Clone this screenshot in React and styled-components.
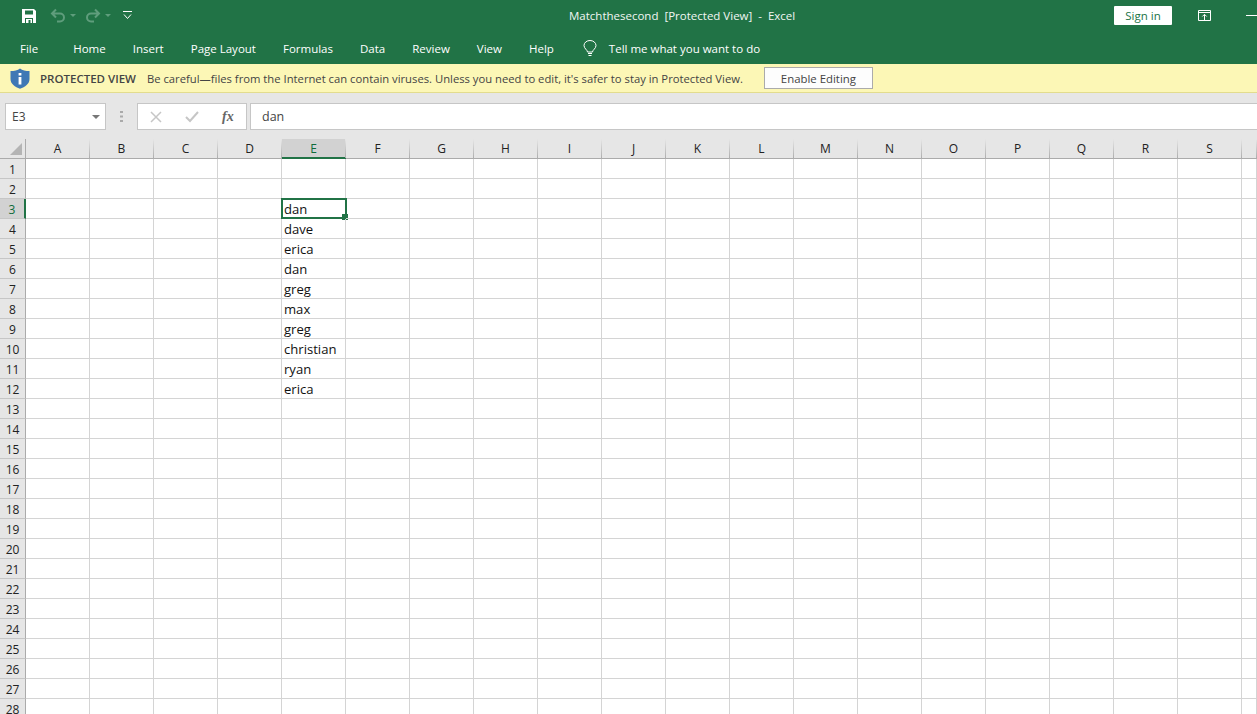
import React from 'react';
import styled, { createGlobalStyle } from 'styled-components';

const GlobalStyle = createGlobalStyle`
  html, body {
    margin: 0;
    padding: 0;
    height: 100%;
    overflow: hidden;
    background: #fff;
    font-family: "Open Sans", "Noto Sans", sans-serif;
  }
`

const Page = styled.div`
  width: 1257px;
  height: 714px;
  overflow: hidden;
  display: flex;
  flex-direction: column;
`
const TitleBar = styled.div`
  height: 36px;
  flex: none;
  box-sizing: border-box;
  padding-bottom: 5px;
  background: #217346;
  display: flex;
  align-items: center;
  color: #fff;
`
const QuickAccess = styled.div`
  width: 569px;
  flex: none;
  display: flex;
  align-items: center;
  padding-left: 21px;
  box-sizing: border-box;
  gap: 4px;
`
const QuickButton = styled.span`
  display: flex;
  align-items: center;
  margin-left: ${props => props.$left || 0}px;
`
const DocTitle = styled.div`
  font-size: 11.5px;
  white-space: pre;
  color: #f1f6f3;
`
const TitleActions = styled.div`
  margin-left: auto;
  display: flex;
  align-items: center;
`
const SignIn = styled.button`
  width: 58px;
  height: 19px;
  border: 0;
  border-radius: 1px;
  padding: 0;
  background: #fff;
  color: #217346;
  font-family: inherit;
  font-size: 11.5px;
  line-height: 19px;
`
const WindowButton = styled.span`
  display: flex;
  margin-left: ${props => props.$left}px;
`
const Minimize = styled.span`
  display: block;
  width: 11px;
  height: 1px;
  background: #fff;
  margin-left: 35px;
`
const TabBar = styled.div`
  height: 28px;
  flex: none;
  box-sizing: border-box;
  padding: 0 0 4px 20px;
  background: #217346;
  display: flex;
  align-items: center;
  gap: 27px;
  color: #fff;
  font-size: 11.5px;
`
const Tab = styled.span`
  margin-right: ${props => props.$extra || 0}px;
`
const TellMe = styled.div`
  display: flex;
  align-items: center;
  gap: 12px;
  margin-left: 2px;
`
const MessageBar = styled.div`
  height: 28px;
  flex: none;
  background: #fcf7b6;
  border-bottom: 1px solid #e2dc8e;
  display: flex;
  align-items: center;
  padding-left: 10px;
  color: #444;
  font-size: 11.25px;
  white-space: nowrap;
`
const MessageTitle = styled.b`
  font-size: 11.5px;
  font-weight: 600;
  margin-left: 10px;
  margin-right: 11px;
`
const EnableButton = styled.button`
  width: 109px;
  height: 22px;
  margin-left: 21px;
  background: #fdfdfd;
  border: 1px solid #ababab;
  padding: 0;
  color: #444;
  font-family: inherit;
  font-size: 11.4px;
`
const FormulaBar = styled.div`
  height: 46px;
  flex: none;
  box-sizing: border-box;
  background: #e6e6e6;
  padding: 10px 0 9px 5px;
  display: flex;
  align-items: stretch;
`
const NameBox = styled.div`
  width: 101px;
  box-sizing: border-box;
  background: #fff;
  border: 1px solid #c6c6c6;
  display: flex;
  align-items: center;
  justify-content: space-between;
  padding: 0 5px 0 6px;
  font-size: 12px;
  color: #444;
`
const Caret = styled.span`
  width: 0;
  height: 0;
  border-left: 4px solid transparent;
  border-right: 4px solid transparent;
  border-top: 4px solid #777;
`
const Grip = styled.span`
  width: 31px;
  flex: none;
  display: flex;
  align-items: center;
  justify-content: center;
`
const FormulaButtons = styled.div`
  width: 110px;
  flex: none;
  box-sizing: border-box;
  background: #fff;
  border: 1px solid #c6c6c6;
  display: flex;
  align-items: center;
  padding-left: 12px;
`
const EnterSlot = styled.span`
  display: flex;
  margin-left: 23px;
`
const FxLabel = styled.i`
  font-family: "Liberation Serif", serif;
  font-size: 14px;
  font-weight: 700;
  color: #666;
  margin-left: 23px;
`
const FormulaInput = styled.div`
  flex: 1;
  margin-left: 3px;
  box-sizing: border-box;
  background: #fff;
  border: 1px solid #c6c6c6;
  border-right: 0;
  padding-left: 11px;
  display: flex;
  align-items: center;
  font-size: 12.5px;
  color: #444;
`
const Sheet = styled.div`
  flex: 1;
  display: grid;
  grid-template-columns: 26px repeat(19, 64px) 1fr;
  grid-auto-rows: 20px;
  background: #fff;
  overflow: hidden;
`
const Corner = styled.div`
  height: 20px;
  background: #e6e6e6;
  border-bottom: 1px solid #ababab;
  border-right: 1px solid #ababab;
  box-sizing: border-box;
  position: relative;
  &::after {
    content: '';
    position: absolute;
    right: 3px;
    bottom: 3px;
    border-left: 12px solid transparent;
    border-bottom: 12px solid #b4b4b4;
  }
`
const ColHead = styled.div`
  height: 20px;
  box-sizing: border-box;
  background: ${props => props.$active ? '#d2d2d2' : '#e6e6e6'};
  border-bottom: ${props => props.$active ? '2px solid #217346' : '1px solid #ababab'};
  display: flex;
  align-items: center;
  justify-content: center;
  padding-right: 1px;
  font-size: 12px;
  color: ${props => props.$active ? '#0f6b3a' : '#222'};
  position: relative;
  &::after {
    content: '';
    position: absolute;
    right: 0;
    top: 0;
    bottom: -1px;
    width: 1px;
    background: linear-gradient(#e6e6e6, #ababab);
  }
`
const RowHead = styled.div`
  box-sizing: border-box;
  background: ${props => props.$active ? '#d2d2d2' : '#e6e6e6'};
  border-bottom: 1px solid #c6c6c6;
  border-right: ${props => props.$active ? '2px solid #217346' : '1px solid #ababab'};
  display: flex;
  align-items: center;
  justify-content: center;
  padding-top: 2px;
  font-size: 12px;
  color: ${props => props.$active ? '#0f6b3a' : '#222'};
`
const Cell = styled.div`
  box-sizing: border-box;
  border-right: 1px solid #d4d4d4;
  border-bottom: 1px solid #d4d4d4;
  padding-left: 2px;
  display: flex;
  align-items: center;
  font-size: 13.1px;
  color: #111;
  white-space: nowrap;
  position: relative;
`
const Selection = styled.div`
  position: absolute;
  left: -1px;
  top: -1px;
  width: 66px;
  height: 21px;
  box-sizing: border-box;
  border: 2px solid #217346;
  pointer-events: none;
  &::after {
    content: '';
    position: absolute;
    right: -3px;
    bottom: -3px;
    width: 6px;
    height: 6px;
    background: #217346;
  }
`

const columns = 'ABCDEFGHIJKLMNOPQRS'.split('');
const names = ['dan', 'dave', 'erica', 'dan', 'greg', 'max', 'greg', 'christian', 'ryan', 'erica'];
const tabs = ['Home', 'Insert', 'Page Layout', 'Formulas', 'Data', 'Review', 'View', 'Help'];

const SaveIcon = () => (
  <svg width="16" height="16" viewBox="0 0 16 16">
    <path d="M1 1h12l2 2v12H1z" fill="#fff" />
    <path d="M4 2.5h8v4H4z" fill="#217346" />
    <path d="M4 10h8v5H4z" fill="#217346" />
    <path d="M5 11h6v4H5z" fill="#fff" />
    <path d="M7.5 12h2v3h-2z" fill="#217346" />
  </svg>
);

const UndoIcon = ({ flip }) => (
  <svg width="16" height="15" viewBox="0 0 16 15">
    <g transform={flip ? 'translate(16) scale(-1 1)' : undefined}>
      <path d="M6 1.5 2 5.5l4 4M2.5 5.5H10a4 4 0 0 1 0 8H7" fill="none" stroke="#5f9d7c" strokeWidth="2" />
    </g>
  </svg>
);

const SmallCaret = () => (
  <svg width="6" height="3" viewBox="0 0 6 3">
    <path d="M0 0h6L3 3z" fill="#5f9d7c" />
  </svg>
);

const CustomizeIcon = () => (
  <svg width="9" height="9" viewBox="0 0 9 9">
    <path d="M0 .5h9" stroke="#fff" />
    <path d="M1 3.5 4.5 7.5 8 3.5" fill="none" stroke="#fff" />
  </svg>
);

const RibbonIcon = () => (
  <svg width="13" height="11" viewBox="0 0 13 11">
    <path d="M.5.5h12v10H.5z" fill="none" stroke="#fff" />
    <path d="M0 2.5h13" stroke="#fff" />
    <path d="M6.5 10V4.5M4.300 6.500 6.500 4.300l2.200 2.200" fill="none" stroke="#fff" />
  </svg>
);

const BulbIcon = () => (
  <svg width="14" height="17" viewBox="0 0 14 17">
    <path d="M4.5 12c0-2-3.500-3.500-3.500-6.500a6 5 0 0 1 12 0C13 8.500 9.500 10 9.500 12z" fill="none" stroke="#fff" />
    <path d="M5 13.500h4M5.500 15.500h3" stroke="#fff" />
  </svg>
);

const ShieldIcon = () => (
  <svg width="20" height="21" viewBox="0 0 20 21">
    <path d="M10 .5c2.500 1.800 5.500 2.600 9.500 2.600V11c0 5-4.500 8-9.500 9.700C5 19 .5 16 .5 11V3.100c4 0 7-.8 9.500-2.600z" fill="#3f78b5" />
    <path d="M8.600 5h2.800v2.600H8.600zM8.600 9h2.800v7.500H8.600z" fill="#fff" />
  </svg>
);

const CancelIcon = () => (
  <svg width="12" height="12" viewBox="0 0 12 12">
    <path d="M1 1l10 10M11 1 1 11" stroke="#c6c6c6" strokeWidth="1.5" />
  </svg>
);

const EnterIcon = () => (
  <svg width="14" height="12" viewBox="0 0 14 12">
    <path d="M1 6l4 4 8-9" fill="none" stroke="#c6c6c6" strokeWidth="2" />
  </svg>
);

const GripIcon = () => (
  <svg width="3" height="11" viewBox="0 0 3 11">
    <path d="M0 0h3v2H0zM0 4.500h3v2H0zM0 9h3v2H0z" fill="#aaa" />
  </svg>
);

const App = () => (
  <Page>
    <GlobalStyle />
    <TitleBar>
      <QuickAccess>
        <SaveIcon />
        <QuickButton $left={9}><UndoIcon /></QuickButton>
        <QuickButton><SmallCaret /></QuickButton>
        <QuickButton $left={5}><UndoIcon flip /></QuickButton>
        <QuickButton><SmallCaret /></QuickButton>
        <QuickButton $left={8}><CustomizeIcon /></QuickButton>
      </QuickAccess>
      <DocTitle>Matchthesecond  [Protected View]  -  Excel</DocTitle>
      <TitleActions>
        <SignIn>Sign in</SignIn>
        <WindowButton $left={26}><RibbonIcon /></WindowButton>
        <Minimize />
      </TitleActions>
    </TitleBar>
    <TabBar>
      <Tab $extra={8}>File</Tab>
      {tabs.map(tab => <Tab key={tab}>{tab}</Tab>)}
      <TellMe>
        <BulbIcon />
        <span>Tell me what you want to do</span>
      </TellMe>
    </TabBar>
    <MessageBar>
      <ShieldIcon />
      <MessageTitle>PROTECTED VIEW</MessageTitle>
      Be careful—files from the Internet can contain viruses. Unless you need to edit, it's safer to stay in Protected View.
      <EnableButton>Enable Editing</EnableButton>
    </MessageBar>
    <FormulaBar>
      <NameBox>E3<Caret /></NameBox>
      <Grip><GripIcon /></Grip>
      <FormulaButtons>
        <CancelIcon />
        <EnterSlot><EnterIcon /></EnterSlot>
        <FxLabel>fx</FxLabel>
      </FormulaButtons>
      <FormulaInput>dan</FormulaInput>
    </FormulaBar>
    <Sheet>
      <Corner />
      {columns.map(col => <ColHead key={col} $active={col === 'E'}>{col}</ColHead>)}
      <ColHead />
      {Array.from({ length: 28 }, (_, r) => (
        <React.Fragment key={r}>
          <RowHead $active={r === 2}>{r + 1}</RowHead>
          {columns.map((col, c) => (
            <Cell key={col}>
              {c === 4 && r >= 2 && r < 12 ? names[r - 2] : null}
              {c === 4 && r === 2 ? <Selection /> : null}
            </Cell>
          ))}
          <Cell />
        </React.Fragment>
      ))}
    </Sheet>
  </Page>
);

export default App;
